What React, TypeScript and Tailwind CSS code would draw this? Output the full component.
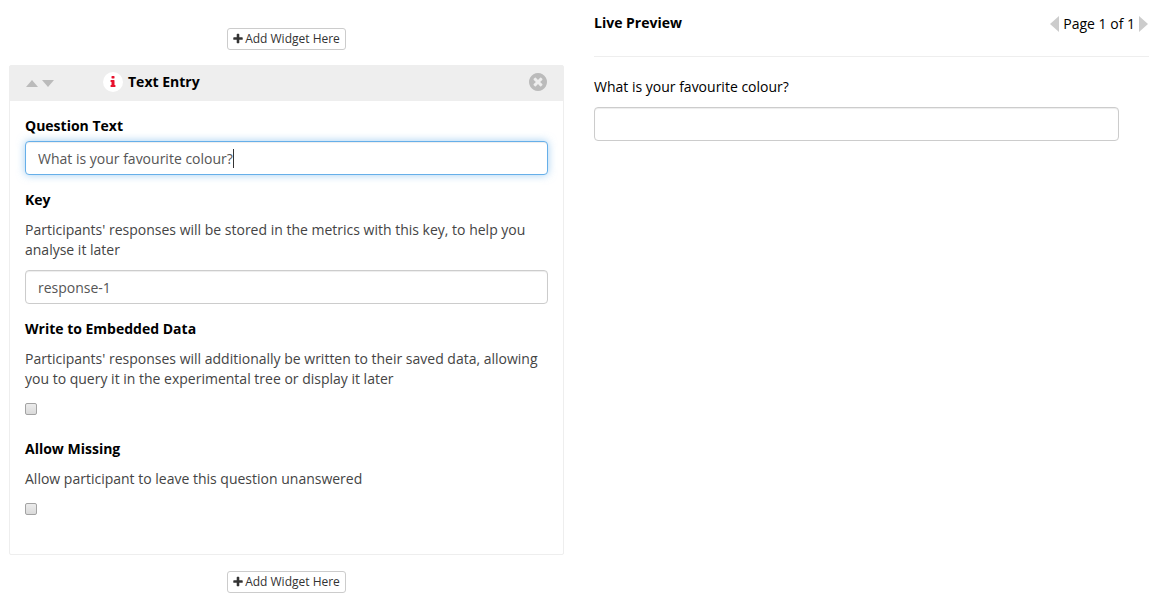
import { useId, useState } from "react";
import type { ReactNode } from "react";

function PlusIcon() {
  return (
    <svg viewBox="192 0 1408 1792" className="h-3 w-2.5 shrink-0" fill="currentColor" aria-hidden="true">
      <path d="M1600 736v192q0 40-28 68t-68 28h-416v416q0 40-28 68t-68 28h-192q-40 0-68-28t-28-68v-416h-416q-40 0-68-28t-28-68v-192q0-40 28-68t68-28h416v-416q0-40 28-68t68-28h192q40 0 68 28t28 68v416h416q40 0 68 28t28 68z" />
    </svg>
  );
}

function InfoIcon() {
  return (
    <svg viewBox="0 0 1792 1792" className="size-3.5" fill="currentColor" aria-hidden="true">
      <path d="M1216 1344v128q0 26-19 45t-45 19h-512q-26 0-45-19t-19-45v-128q0-26 19-45t45-19h64v-384h-64q-26 0-45-19t-19-45v-128q0-26 19-45t45-19h384q26 0 45 19t19 45v576h64q26 0 45 19t19 45zm-128-1152v192q0 26-19 45t-45 19h-256q-26 0-45-19t-19-45v-192q0-26 19-45t45-19h256q26 0 45 19t19 45z" />
    </svg>
  );
}

function RemoveIcon() {
  return (
    <svg viewBox="128 128 1536 1536" className="size-[18px]" fill="currentColor" aria-hidden="true">
      <path d="M1277 1122q0-26-19-45l-181-181 181-181q19-19 19-45 0-27-19-46l-90-90q-19-19-46-19-26 0-45 19l-181 181-181-181q-19-19-45-19-27 0-46 19l-90 90q-19 19-19 46 0 26 19 45l181 181-181 181q-19 19-19 45 0 27 19 46l90 90q19 19 46 19 26 0 45-19l181-181 181 181q19 19 45 19 27 0 46-19l90-90q19-19 19-46zm387-226q0 209-103 385.5t-279.5 279.5-385.5 103-385.5-103-279.5-279.5-103-385.5 103-385.5 279.5-279.5 385.5-103 385.5 103 279.5 279.5 103 385.5z" />
    </svg>
  );
}

function AddWidgetButton() {
  return (
    <button
      type="button"
      className="flex h-[22px] items-center gap-0.5 self-center rounded-[3px] border border-[#ccc] bg-white px-[5px] text-xs text-[#333]"
    >
      <PlusIcon />
      Add Widget Here
    </button>
  );
}

const fieldClass =
  "block h-[34px] w-full rounded border border-[#ccc] bg-white px-3 text-sm text-[#555] shadow-[inset_0_1px_1px_rgba(0,0,0,0.075)] outline-none";
const activeFieldClass =
  "block h-[34px] w-full rounded border border-[#66afe9] bg-white px-3 text-sm text-[#555] caret-transparent shadow-[inset_0_1px_1px_rgba(0,0,0,0.075),0_0_8px_rgba(102,175,233,0.6)] outline-none";

function Label({ htmlFor, children }: { htmlFor: string; children: ReactNode }) {
  return (
    <label htmlFor={htmlFor} className="block font-bold text-black">
      {children}
    </label>
  );
}

function CheckField({ label, help }: { label: string; help: string }) {
  const id = useId();
  return (
    <div className="mb-5">
      <Label htmlFor={id}>{label}</Label>
      <p className="my-2.5">{help}</p>
      <div className="flex h-5 items-center">
        <input
          id={id}
          type="checkbox"
          className="size-3 appearance-none rounded-xs border border-[#a3a3a3] bg-linear-to-b from-[#ececec] to-[#dadada] checked:bg-[#66afe9]"
        />
      </div>
    </div>
  );
}

export default function App() {
  const [question, setQuestion] = useState("What is your favourite colour?");
  const [key, setKey] = useState("response-1");

  return (
    <div className="grid grid-cols-2 gap-x-[30px] pr-3.5 pl-[9px] font-['Open_Sans',sans-serif] text-sm leading-5 text-[#444]">
      <section className="flex flex-col pt-7 pb-4">
        <AddWidgetButton />
        <article className="mt-[15px] mb-4 rounded-xs border border-[#eee]">
          <header className="flex h-[35px] items-center bg-[#eee] px-4 pb-[3px] text-black">
            <div className="flex w-[77px] items-center gap-1 pt-[3px] text-[#bbb]">
              <button type="button" aria-label="Move up">
                <svg viewBox="0 0 12 7" className="h-[7px] w-3" fill="currentColor">
                  <path d="M0 7 6 0l6 7z" />
                </svg>
              </button>
              <button type="button" aria-label="Move down">
                <svg viewBox="0 0 12 7" className="h-[7px] w-3" fill="currentColor">
                  <path d="M0 0h12L6 7z" />
                </svg>
              </button>
            </div>
            <span className="flex size-5 items-center justify-center rounded-full bg-white text-[#e8112d]">
              <InfoIcon />
            </span>
            <h2 className="ml-[5px] font-bold">Text Entry</h2>
            <button type="button" aria-label="Remove widget" className="ml-auto text-[#bbb]">
              <RemoveIcon />
            </button>
          </header>
          <div className="p-[15px]">
            <div className="mb-[15px]">
              <Label htmlFor="question">Question Text</Label>
              <div className="relative mt-[5px]">
                <input
                  id="question"
                  type="text"
                  value={question}
                  onChange={(e) => setQuestion(e.target.value)}
                  className={activeFieldClass}
                />
                <div className="pointer-events-none absolute inset-y-0 left-[13px] flex items-center" aria-hidden="true">
                  <span className="invisible whitespace-pre">{question}</span>
                  <span className="h-[19px] w-px bg-[#333]" />
                </div>
              </div>
            </div>
            <div className="mb-[15px]">
              <Label htmlFor="key">Key</Label>
              <p className="my-2.5">
                Participants' responses will be stored in the metrics with this key, to help you analyse it later
              </p>
              <input
                id="key"
                type="text"
                value={key}
                onChange={(e) => setKey(e.target.value)}
                className={fieldClass}
              />
            </div>
            <CheckField
              label="Write to Embedded Data"
              help="Participants' responses will additionally be written to their saved data, allowing you to query it in the experimental tree or display it later"
            />
            <CheckField label="Allow Missing" help="Allow participant to leave this question unanswered" />
          </div>
        </article>
        <AddWidgetButton />
      </section>

      <section className="pt-[13px] text-black">
        <header className="flex h-11 items-start justify-between border-b border-[#eee]">
          <h2 className="font-bold">Live Preview</h2>
          <nav className="flex items-center gap-1 pt-px pr-px" aria-label="Pages">
            <button type="button" aria-label="Previous page" className="text-[#ccc]">
              <svg viewBox="0 0 9 16" className="h-4 w-[9px]" fill="currentColor">
                <path d="M9 0v16L0 8z" />
              </svg>
            </button>
            Page 1 of 1
            <button type="button" aria-label="Next page" className="text-[#ccc]">
              <svg viewBox="0 0 9 16" className="h-4 w-[9px]" fill="currentColor">
                <path d="M0 0v16l9-8z" />
              </svg>
            </button>
          </nav>
        </header>
        <div className="pt-5 pr-[30px]">
          <label htmlFor="answer" className="mb-2.5 block">
            {question}
          </label>
          <input id="answer" type="text" className={fieldClass} />
        </div>
      </section>
    </div>
  );
}
